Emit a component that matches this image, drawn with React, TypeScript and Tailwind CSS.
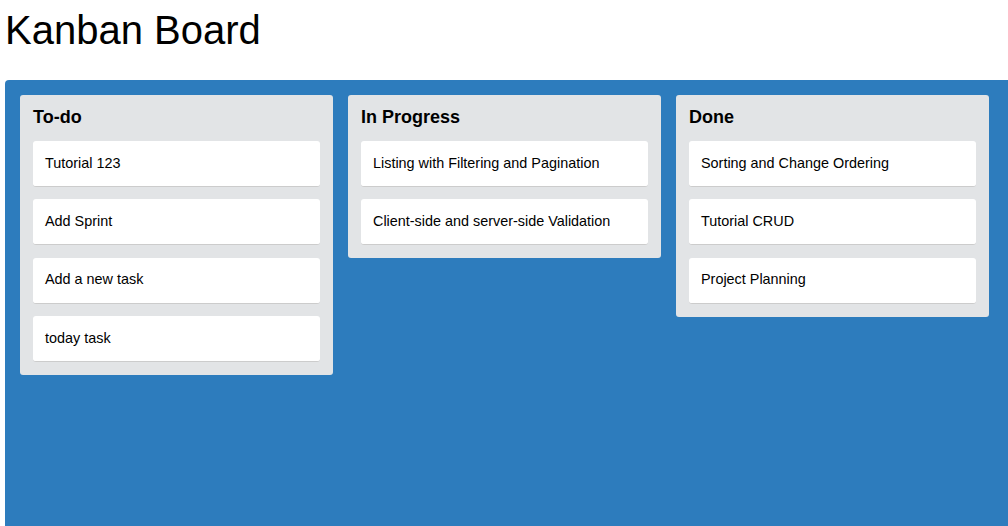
import React from 'react';

const columns = [
  { title: 'To-do', tasks: ['Tutorial 123', 'Add Sprint', 'Add a new task', 'today task'] },
  { title: 'In Progress', tasks: ['Listing with Filtering and Pagination', 'Client-side and server-side Validation'] },
  { title: 'Done', tasks: ['Sorting and Change Ordering', 'Tutorial CRUD', 'Project Planning'] },
];

export default function App() {
  return (
    <div className="min-h-screen bg-white text-black overflow-hidden" style={{ fontFamily: '"Liberation Sans", Arial, sans-serif' }}>
      <h1 className="pl-[5px] pt-[7px] text-[40px] leading-[46px] font-normal">Kanban Board</h1>

      {/* Board */}
      <div className="mt-[27px] ml-[5px] min-h-[446px] bg-[#2d7cbd] rounded-tl-[4px] pt-[15px] pl-[15px] flex items-start gap-[15px]">
        {columns.map((col) => (
          <div key={col.title} className="w-[313px] shrink-0 bg-[#e2e4e6] rounded-[3px] px-[13px] pt-[11px] pb-[13px]">
            <h2 className="text-[18px] leading-[22px] font-bold mb-[13px]">{col.title}</h2>
            <div className="flex flex-col gap-[12.33px]">
              {col.tasks.map((t) => (
                <div key={t} className="h-[46px] bg-white rounded-[3px] border-b border-[#cccccc] flex items-center px-[12px] text-[14.4px]">
                  {t}
                </div>
              ))}
            </div>
          </div>
        ))}
      </div>
    </div>
  );
}
